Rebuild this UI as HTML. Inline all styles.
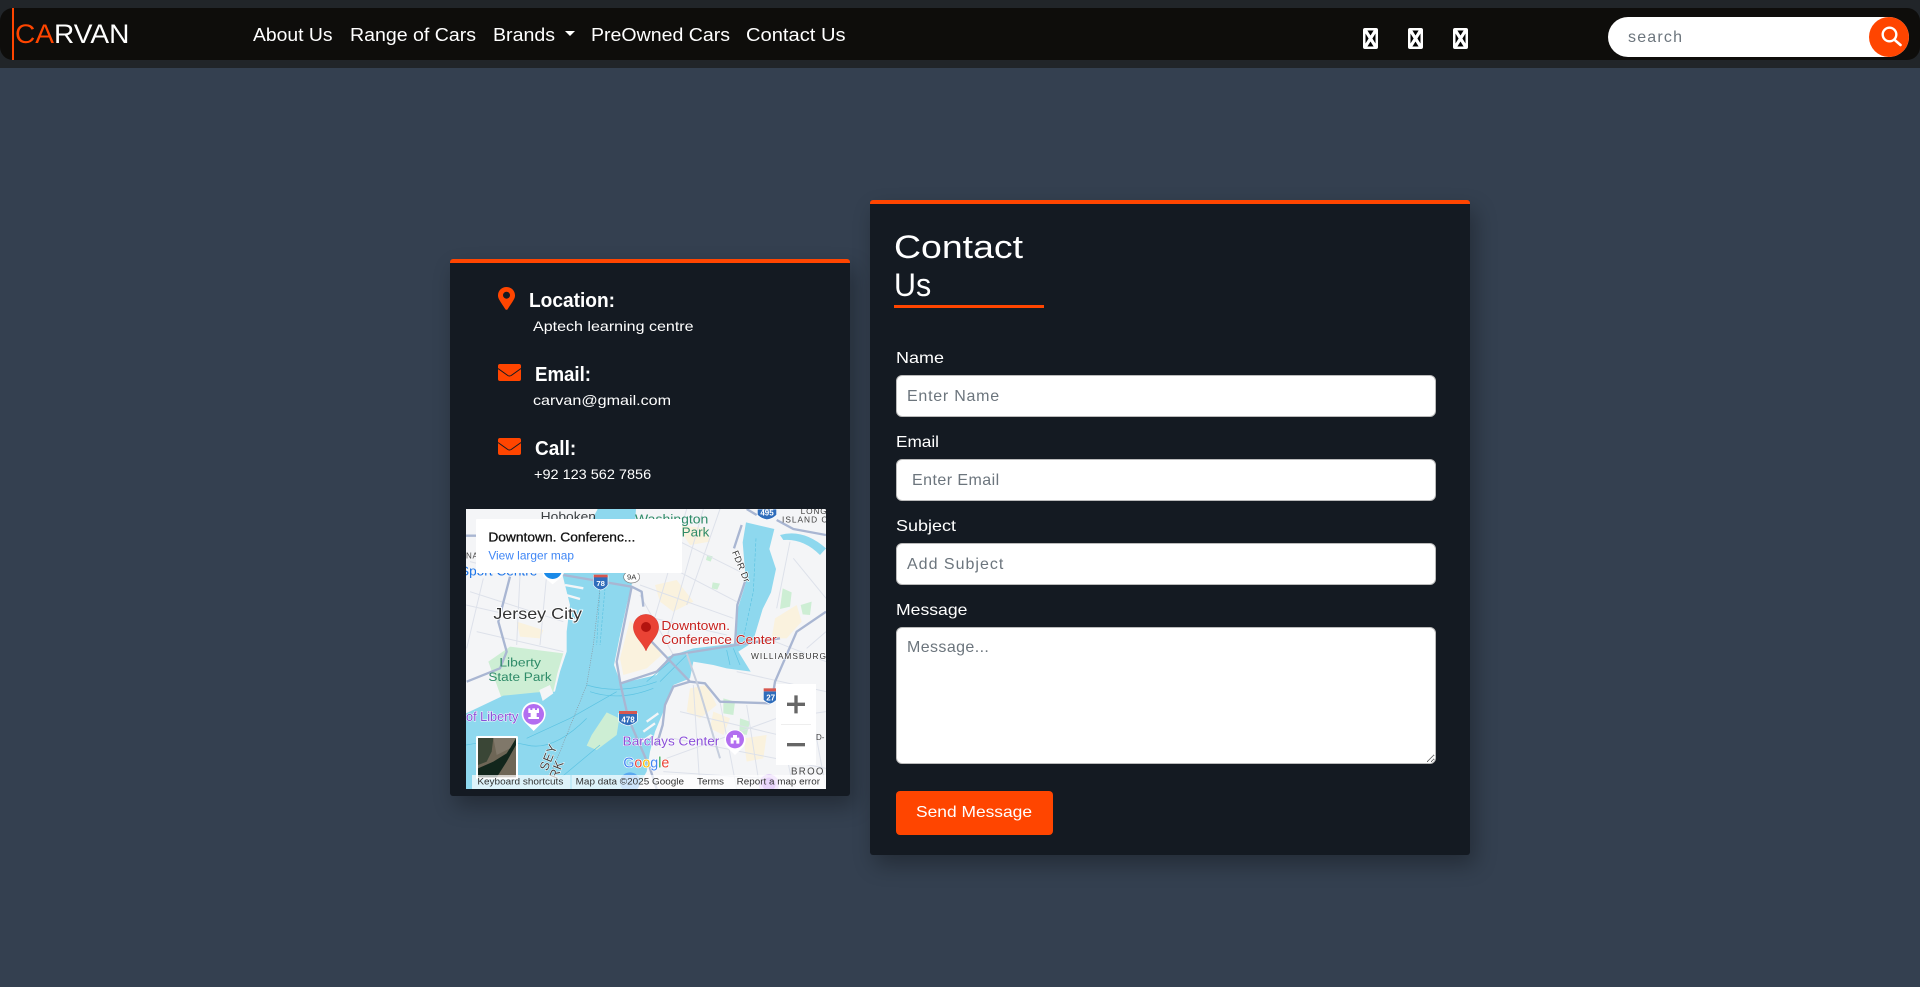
<!DOCTYPE html>
<html lang="en">
<head>
<meta charset="utf-8">
<title>Carvan - Contact Us</title>
<style>
*{box-sizing:border-box}
html,body{margin:0;padding:0;width:1920px;height:987px;overflow:hidden;background:#344050;font-family:"Liberation Sans",Arial,sans-serif;color:#fff}
.t{position:absolute;white-space:nowrap;line-height:1;transform-origin:0 0;margin:0;font-weight:400;color:#fff;text-decoration:none}
.band{position:absolute;left:0;top:0;width:1920px;height:68px;background:#212529}
nav{position:absolute;left:0;top:8px;width:1920px;height:52px;background:#0e0d0b;border-radius:13px}
.bar{position:absolute;left:12px;top:8px;width:2px;height:52px;background:#ff4500}
.n{font-size:18px;top:26px}
.caret{position:absolute;left:565px;top:31px;width:0;height:0;border-left:5.3px solid transparent;border-right:5.3px solid transparent;border-top:5.4px solid #fff}
.tofu{position:absolute;top:28px;width:15px;height:21px}
.search{position:absolute;left:1608px;top:17px;width:301px;height:40px;border:0;border-radius:20px;background:#fff;padding:2px 0 0 20px;font:16px "Liberation Sans",Arial,sans-serif;outline:0;letter-spacing:1.2px}
.search::placeholder,.f::placeholder{color:#6c757d;opacity:1}
.sbtn{position:absolute;left:1869px;top:17px;width:40px;height:40px;border:0;border-radius:50%;background:#ff4500;padding:0}
.card{position:absolute;background:#141a22;border-top:4px solid #ff4500;border-radius:3px;box-shadow:5px 10px 22px rgba(0,0,0,.3)}
.c1{left:450px;top:259px;width:400px;height:537px}
.c2{left:870px;top:200px;width:600px;height:655px}
.h{font-size:20px;font-weight:700}
.b{font-size:14px}
.l{font-size:16px}
.f{position:absolute;left:896px;width:540px;height:42px;background:#fff;border:1px solid #bbb;border-radius:6px;padding:2px 0 0 10px;font:16px "Liberation Sans",Arial,sans-serif;color:#333;outline:0}
textarea.f{height:137px;padding-top:11px;resize:vertical}
.send{position:absolute;left:896px;top:791px;width:157px;height:44px;background:#ff4500;border:0;border-radius:4px;padding:0}
.rule{position:absolute;left:894px;top:305px;width:150px;height:3px;background:#ff4500}
#map{position:absolute;left:466px;top:509px;width:360px;height:280px;display:block}
#map text{font-family:"Liberation Sans",Arial,sans-serif}
</style>
</head>
<body>
<div class="band"></div>
<nav></nav>
<div class="bar"></div>
<a class="t" style="left:14.7px;top:21px;font-size:27px;transform:scaleX(1.04)"><span style="color:#ff4500">CA</span>RVAN</a>
<a class="t n" style="left:253px;transform:scaleX(1.074)">About Us</a>
<a class="t n" style="left:349.5px;transform:scaleX(1.086)">Range of Cars</a>
<a class="t n" style="left:492.5px;transform:scaleX(1.087)">Brands</a>
<span class="caret"></span>
<a class="t n" style="left:590.5px;transform:scaleX(1.086)">PreOwned Cars</a>
<a class="t n" style="left:745.500px;transform:scaleX(1.118)">Contact Us</a>

<svg class="tofu" style="left:1363px" viewBox="0 0 15 21"><rect width="15" height="21" rx="2" fill="#fff"/><rect x="2.5" y="2.5" width="10" height="16" fill="#000"/><path d="M2.5 2.5L12.5 18.5M12.5 2.5L2.5 18.5" stroke="#fff" stroke-width="3.2"/></svg>
<svg class="tofu" style="left:1408px" viewBox="0 0 15 21"><rect width="15" height="21" rx="2" fill="#fff"/><rect x="2.5" y="2.5" width="10" height="16" fill="#000"/><path d="M2.5 2.5L12.5 18.5M12.5 2.5L2.5 18.5" stroke="#fff" stroke-width="3.2"/></svg>
<svg class="tofu" style="left:1453px" viewBox="0 0 15 21"><rect width="15" height="21" rx="2" fill="#fff"/><rect x="2.5" y="2.5" width="10" height="16" fill="#000"/><path d="M2.5 2.5L12.5 18.5M12.5 2.5L2.5 18.5" stroke="#fff" stroke-width="3.2"/></svg>

<input class="search" placeholder="search">
<button class="sbtn" aria-label="search"><svg width="40" height="40" viewBox="0 0 40 40" style="display:block"><circle cx="20.5" cy="17.5" r="6.800" fill="none" stroke="#fff" stroke-width="2.400"/><path d="M25.5 22.800L31.500 28" stroke="#fff" stroke-width="2.600" stroke-linecap="round"/></svg></button>

<section class="card c1"></section>
<svg style="position:absolute;left:498px;top:287px" width="17" height="23" viewBox="0 0 17 23"><path fill-rule="evenodd" fill="#ff4500" d="M8.5 0C3.8 0 0 3.7 0 8.3c0 3.3 1.200 4.500 7.400 14c.5.8 1.700.8 2.200 0C15.800 12.800 17 11.600 17 8.300 17 3.700 13.200 0 8.500 0zM8.500 11.700a3.500 3.500 0 1 1 0-7 3.500 3.500 0 0 1 0 7z"/></svg>
<h3 class="t h" style="left:529px;top:291px;transform:scaleX(.956)">Location:</h3>
<p class="t b" style="left:533px;top:319px;transform:scaleX(1.146)">Aptech learning centre</p>
<svg style="position:absolute;left:498px;top:364px" width="23" height="17" viewBox="0 0 23 17"><rect width="23" height="17" rx="2" fill="#ff4500"/><path d="M0 4.500L9.800 11.500Q11.500 12.500 13.200 11.500L23 4.500" fill="none" stroke="#141a22" stroke-width="1"/></svg>
<h3 class="t h" style="left:534.500px;top:365px;transform:scaleX(.933)">Email:</h3>
<p class="t b" style="left:533px;top:392.500px;transform:scaleX(1.15)">carvan@gmail.com</p>
<svg style="position:absolute;left:498px;top:438px" width="23" height="17" viewBox="0 0 23 17"><rect width="23" height="17" rx="2" fill="#ff4500"/><path d="M0 4.500L9.800 11.500Q11.500 12.500 13.200 11.500L23 4.500" fill="none" stroke="#141a22" stroke-width="1"/></svg>
<h3 class="t h" style="left:534.500px;top:439px;transform:scaleX(.95)">Call:</h3>
<p class="t b" style="left:534px;top:467px;transform:scaleX(1.034)">+92 123 562 7856</p>

<svg id="map" viewBox="18 12 1080 840" preserveAspectRatio="none">
<rect x="18" y="12" width="1080" height="840" fill="#f4f5f7"/>
<!-- beige and parks -->
<g fill="#faf2de">
<path d="M490 510L480 460L510 345L560 400L610 445L560 490Z"/>
<path d="M585 240L650 225L700 290L640 320L600 290Z"/>
<path d="M690 550L740 540L770 600L720 640L680 620Z"/>
<path d="M650 60L740 70L750 110L690 120Z"/>
<path d="M945 340L1010 300L1025 350L980 400L935 400Z"/>
<path d="M170 350L250 375L240 400L180 395Z"/>
<path d="M760 620L810 640L790 690L750 670Z"/>
<path d="M850 700L920 690L910 760L860 770Z"/>
</g>
<g fill="#cdeed4">
<path d="M150 425L310 445L292 505L280 560L125 580L85 470Z"/>
<path d="M968 250L995 262L990 305L960 312Z"/>
<path d="M1022 300L1055 290L1050 330L1028 328Z"/>
<path d="M758 232L780 236L772 254L755 250Z"/>
<path d="M742 150L758 154L752 170L738 165Z"/>
<path d="M790 580L825 590L820 630L790 625Z"/>
<path d="M840 640L870 650L860 690L838 685Z"/>
</g>
<!-- water -->
<path fill="#8ed8ee" d="M413 12L528 12L520 130L515 240L500 300L478 400L462 480L482 535L590 510L625 455L700 430L828 415L833 312L858 232L848 112L858 52L943 72L928 132L948 192L933 262L908 312L878 412L835 440L872 500L800 490L760 480L700 470L690 520L640 540L610 620L585 680L570 740L560 800L530 852L18 852L18 625L130 572L230 562L285 560L300 500L320 440L320 380L330 300L308 212Z"/>
<path fill="#8ed8ee" d="M960 90Q1030 70 1098 130L1080 150Q1030 100 970 105Z"/>
<path fill="#f4f5f7" d="M238 555L270 540L280 565L248 588Z"/>
<path fill="#cdeed4" d="M440 622L395 690L380 722L410 735L470 690L478 640Z"/>
<g stroke="#f4f5f7" stroke-width="7" fill="none"><path d="M560 650L595 625M550 680L585 655M545 710L575 690M315 240L370 250M318 270L360 282M320 310L350 318M325 340L350 345M700 478L730 510M770 488L790 505"/></g>
<!-- water lines -->
<g stroke="#5cc3e2" stroke-width="2" fill="none"><path d="M380 540Q480 570 590 530"/><path d="M390 560Q480 590 580 550"/><path d="M200 700L330 640L470 560"/><path d="M888 100L880 260L850 400" stroke-dasharray="10 5"/><path d="M300 820L420 720"/><path d="M18 720Q120 700 200 720T380 640"/><path d="M630 470L560 530M680 450L600 530M820 430L840 480M800 435L810 480"/><path d="M420 250L410 420M435 250L420 420" stroke-dasharray="8 4"/></g>
<path d="M420 250L400 420L380 540L300 740L270 810" stroke="#8a8f98" stroke-width="2" fill="none" stroke-dasharray="3 4"/>
<!-- minor roads -->
<g stroke="#dde1ea" stroke-width="3" fill="none">
<path d="M540 240L820 340M580 160L830 290M600 80L840 200M680 12L560 420M780 12L680 300M640 450L540 270M920 400L1098 470M1000 160L1098 280M990 110L950 310M1040 430L1098 380M730 12L620 400M540 330L800 390"/>
<path d="M700 540L720 852M780 590L830 852M640 700L1098 790M620 760L950 640M860 600L900 852M950 600L1000 852M1040 540L1098 852M830 500L1098 560M960 640L1098 620M660 620L1000 700M610 800L1060 830"/>
<path d="M30 260L310 350M50 380L310 440M180 210L170 420M260 210L240 420M70 220L20 430M30 170L150 200M18 300L150 330"/>
</g>
<!-- main roads -->
<g stroke="#a9b6d2" stroke-width="7" fill="none" stroke-linejoin="round">
<path d="M310 210L515 245L545 260L550 305"/>
<path d="M515 245L470 470L482 540L505 640L570 790L590 852"/>
<path d="M482 535L590 500L640 450L830 420L960 400"/>
<path d="M575 410L690 530L735 535L780 590L930 595"/>
<path d="M690 530L640 545L615 600L608 660L590 720"/>
<path d="M150 215L115 350L140 440L120 490L20 530"/>
<path d="M845 60L822 130"/>
<path d="M855 230L832 300L825 420"/>
<path d="M950 45L1000 72L1098 90"/>
<path d="M1098 320L1010 380L945 530L935 590"/>
<path d="M860 12L890 30"/>
<path d="M18 92L70 92"/>
</g>
<path d="M680 445L720 560L780 760" stroke="#c6cedd" stroke-width="6" fill="none"/>
<!-- labels covered by popup -->
<text x="242" y="48" font-size="40" fill="#3c4043" textLength="166" lengthAdjust="spacingAndGlyphs">Hoboken</text>
<text x="525" y="55" font-size="38" fill="#2e8b68" textLength="220" lengthAdjust="spacingAndGlyphs">Washington</text>
<text x="665" y="95" font-size="38" fill="#2e8b68" textLength="83" lengthAdjust="spacingAndGlyphs">Park</text>
<text x="0" y="212" font-size="38" fill="#1a73e8" textLength="232" lengthAdjust="spacingAndGlyphs">Sport Centre</text>
<text x="18" y="160" font-size="24" fill="#444" letter-spacing="2">NA</text>
<path d="M278 238L250 215A30 30 0 1 1 306 215Z" fill="#fff"/><circle cx="278" cy="194" r="28" fill="#1a8ae8"/>
<!-- shields -->
<g><path d="M400 212H444V240Q436 252 422 255Q408 252 400 240Z" fill="#2f6dbb" stroke="#fff" stroke-width="2"/><rect x="401" y="209" width="42" height="8" fill="#d7574f"/><text x="422" y="243" font-size="23" font-weight="700" fill="#fff" text-anchor="middle">78</text></g>
<g><ellipse cx="515" cy="216" rx="24" ry="18" fill="#fff" stroke="#777" stroke-width="2"/><text x="515" y="224" font-size="23" fill="#333" text-anchor="middle">9A</text></g>
<g><path d="M476 625H532V648Q524 658 504 662Q484 658 476 648Z" fill="#2f6dbb" stroke="#fff" stroke-width="2"/><rect x="477" y="618" width="54" height="9" fill="#d7574f"/><text x="504" y="652" font-size="24" font-weight="700" fill="#fff" text-anchor="middle">478</text></g>
<g><path d="M910 558H950V585Q940 595 930 597Q918 593 910 585Z" fill="#2f6dbb" stroke="#fff" stroke-width="2"/><rect x="911" y="550" width="38" height="9" fill="#d7574f"/><text x="932" y="586" font-size="24" font-weight="700" fill="#fff" text-anchor="middle">27</text></g>
<g><path d="M892 12H950V30Q935 44 920 44Q905 42 892 30Z" fill="#2f6dbb" stroke="#fff" stroke-width="2"/><text x="921" y="32" font-size="24" font-weight="700" fill="#fff" text-anchor="middle">495</text></g>
<!-- labels -->
<g transform="rotate(68 840 180)"><text x="795" y="188" font-size="28" fill="#333" stroke="#fff" stroke-width="4" paint-order="stroke" letter-spacing="1">FDR Dr</text></g>
<text x="1022" y="27" font-size="25" fill="#444" letter-spacing="2.500">LONG</text>
<text x="966" y="53" font-size="25" fill="#444" letter-spacing="3">ISLAND C</text>
<text x="100" y="342" font-size="48" fill="#333" stroke="#fff" stroke-width="5" paint-order="stroke" textLength="266" lengthAdjust="spacingAndGlyphs">Jersey City</text>
<text x="118" y="485" font-size="37" fill="#2e8b68" textLength="125" lengthAdjust="spacingAndGlyphs">Liberty</text>
<text x="85" y="528" font-size="37" fill="#2e8b68" textLength="190" lengthAdjust="spacingAndGlyphs">State Park</text>
<text x="604" y="375" font-size="38" fill="#c5221f" stroke="#fff" stroke-width="3" paint-order="stroke" textLength="206" lengthAdjust="spacingAndGlyphs">Downtown.</text>
<text x="604" y="417" font-size="38" fill="#c5221f" stroke="#fff" stroke-width="3" paint-order="stroke" textLength="346" lengthAdjust="spacingAndGlyphs">Conference Center</text>
<text x="873" y="462" font-size="25" fill="#333" stroke="#fff" stroke-width="3" paint-order="stroke" textLength="225" lengthAdjust="spacing">WILLIAMSBURG</text>
<text x="18" y="648" font-size="38" fill="#8a4fd8" stroke="#fff" stroke-width="3" paint-order="stroke" textLength="157" lengthAdjust="spacingAndGlyphs">of Liberty</text>
<text x="488" y="722" font-size="38" fill="#8a4fd8" stroke="#fff" stroke-width="3" paint-order="stroke" textLength="290" lengthAdjust="spacingAndGlyphs">Barclays Center</text>
<text x="993" y="808" font-size="29" fill="#444" letter-spacing="4">BROO</text>
<text x="1068" y="705" font-size="24" fill="#444">D-</text>
<g transform="rotate(-68 265 765)"><text x="232" y="775" font-size="38" fill="#444" stroke="#fff" stroke-width="3" paint-order="stroke" letter-spacing="2">SEY</text></g>
<g transform="rotate(-68 290 800)"><text x="268" y="810" font-size="38" fill="#444" stroke="#fff" stroke-width="3" paint-order="stroke" letter-spacing="2">RK</text></g>
<!-- markers -->
<path d="M221 678L195 652A36 36 0 1 1 247 652Z" fill="#fff"/><circle cx="221" cy="628" r="31" fill="#b26ef0"/>
<path d="M205 610h6v5h6v-5h8v5h6v-5h6v14h-7v12h7v6h-32v-6h7v-12h-7z" fill="#fff"/>
<path d="M825 750L802 728A32 32 0 1 1 848 728Z" fill="#fff"/><circle cx="825" cy="703" r="27" fill="#b26ef0"/>
<path d="M812 716V698H819V690H831V698H838V716H829V706H821V716Z" fill="#fff"/>
<circle cx="510" cy="832" r="30" fill="#5aa9f0"/><circle cx="927" cy="838" r="30" fill="#d9b8f8"/><circle cx="927" cy="838" r="20" fill="#b26ef0"/>
<text x="490" y="788" font-size="44" stroke="#fff" stroke-width="4" paint-order="stroke" textLength="138" lengthAdjust="spacingAndGlyphs"><tspan fill="#4285f4">G</tspan><tspan fill="#ea4335">o</tspan><tspan fill="#fbbc05">o</tspan><tspan fill="#4285f4">g</tspan><tspan fill="#34a853">l</tspan><tspan fill="#ea4335">e</tspan></text>
<!-- red pin -->
<path d="M558 438C548 412 520 395 520 366A38 38 0 0 1 596 366C596 395 568 412 558 438Z" fill="#ea4335" stroke="#c5221f" stroke-width="1"/>
<circle cx="558" cy="366" r="15" fill="#b3140f"/>
<!-- zoom control -->
<rect x="948" y="537" width="120" height="243" fill="#fff"/>
<rect x="963" y="657" width="90" height="2" fill="#e6e6e6"/>
<path d="M981 593H1003V571H1013V593H1035V603H1013V625H1003V603H981Z" fill="#666"/>
<rect x="981" y="714" width="54" height="10" fill="#666"/>
<!-- thumb -->
<rect x="48" y="693" width="126" height="130" rx="4" fill="#fff"/>
<rect x="54" y="699" width="114" height="118" fill="#6e6656"/>
<path d="M54 699H100L95 740L80 770L54 780Z" fill="#3a4636"/>
<path d="M54 817V790L100 770L140 745L168 700V720L140 770L110 817Z" fill="#12261c"/>
<path d="M100 699H168L150 730L110 750Z" fill="#80786a"/>
<!-- footer -->
<rect x="36" y="810" width="296" height="42" fill="#fff" fill-opacity=".7"/>
<rect x="334" y="810" width="764" height="42" fill="#fff" fill-opacity=".7"/>
<g font-size="27" fill="#333">
<text x="52" y="838" textLength="258" lengthAdjust="spacingAndGlyphs">Keyboard shortcuts</text>
<text x="347" y="838" textLength="325" lengthAdjust="spacingAndGlyphs">Map data ©2025 Google</text>
<text x="711" y="838" textLength="81" lengthAdjust="spacingAndGlyphs">Terms</text>
<text x="830" y="838" textLength="250" lengthAdjust="spacingAndGlyphs">Report a map error</text>
</g>
<!-- popup -->
<rect x="48" y="42" width="618" height="162" rx="3" fill="#fff"/>
<text x="85" y="110" font-size="40" fill="#111" stroke="#111" stroke-width=".9" textLength="441" lengthAdjust="spacingAndGlyphs">Downtown. Conferenc...</text>
<text x="85" y="164" font-size="36" fill="#3f86f5" textLength="257" lengthAdjust="spacingAndGlyphs">View larger map</text>
</svg>

<section class="card c2"></section>
<h2 class="t" style="left:894px;top:231px;font-size:32px;transform:scaleX(1.17)">Contact</h2>
<h2 class="t" style="left:894px;top:269px;font-size:32px;transform:scaleX(.95)">Us</h2>
<div class="rule"></div>
<form>
<label class="t l" style="left:896px;top:351px;transform:scaleX(1.124)">Name</label>
<input class="f" style="top:375px;letter-spacing:.75px" placeholder="Enter Name">
<label class="t l" style="left:896px;top:435px;transform:scaleX(1.075)">Email</label>
<input class="f" style="top:459px;padding-left:15px;letter-spacing:.45px" placeholder="Enter Email">
<label class="t l" style="left:896px;top:519px;transform:scaleX(1.124)">Subject</label>
<input class="f" style="top:543px;letter-spacing:1px" placeholder="Add Subject">
<label class="t l" style="left:896px;top:603px;transform:scaleX(1.1)">Message</label>
<textarea class="f" style="top:627px;letter-spacing:.4px" placeholder="Message..."></textarea>
<button class="send" type="button"></button>
<span class="t l" style="left:916px;top:805px;transform:scaleX(1.087)">Send Message</span>
</form>
</body>
</html>
